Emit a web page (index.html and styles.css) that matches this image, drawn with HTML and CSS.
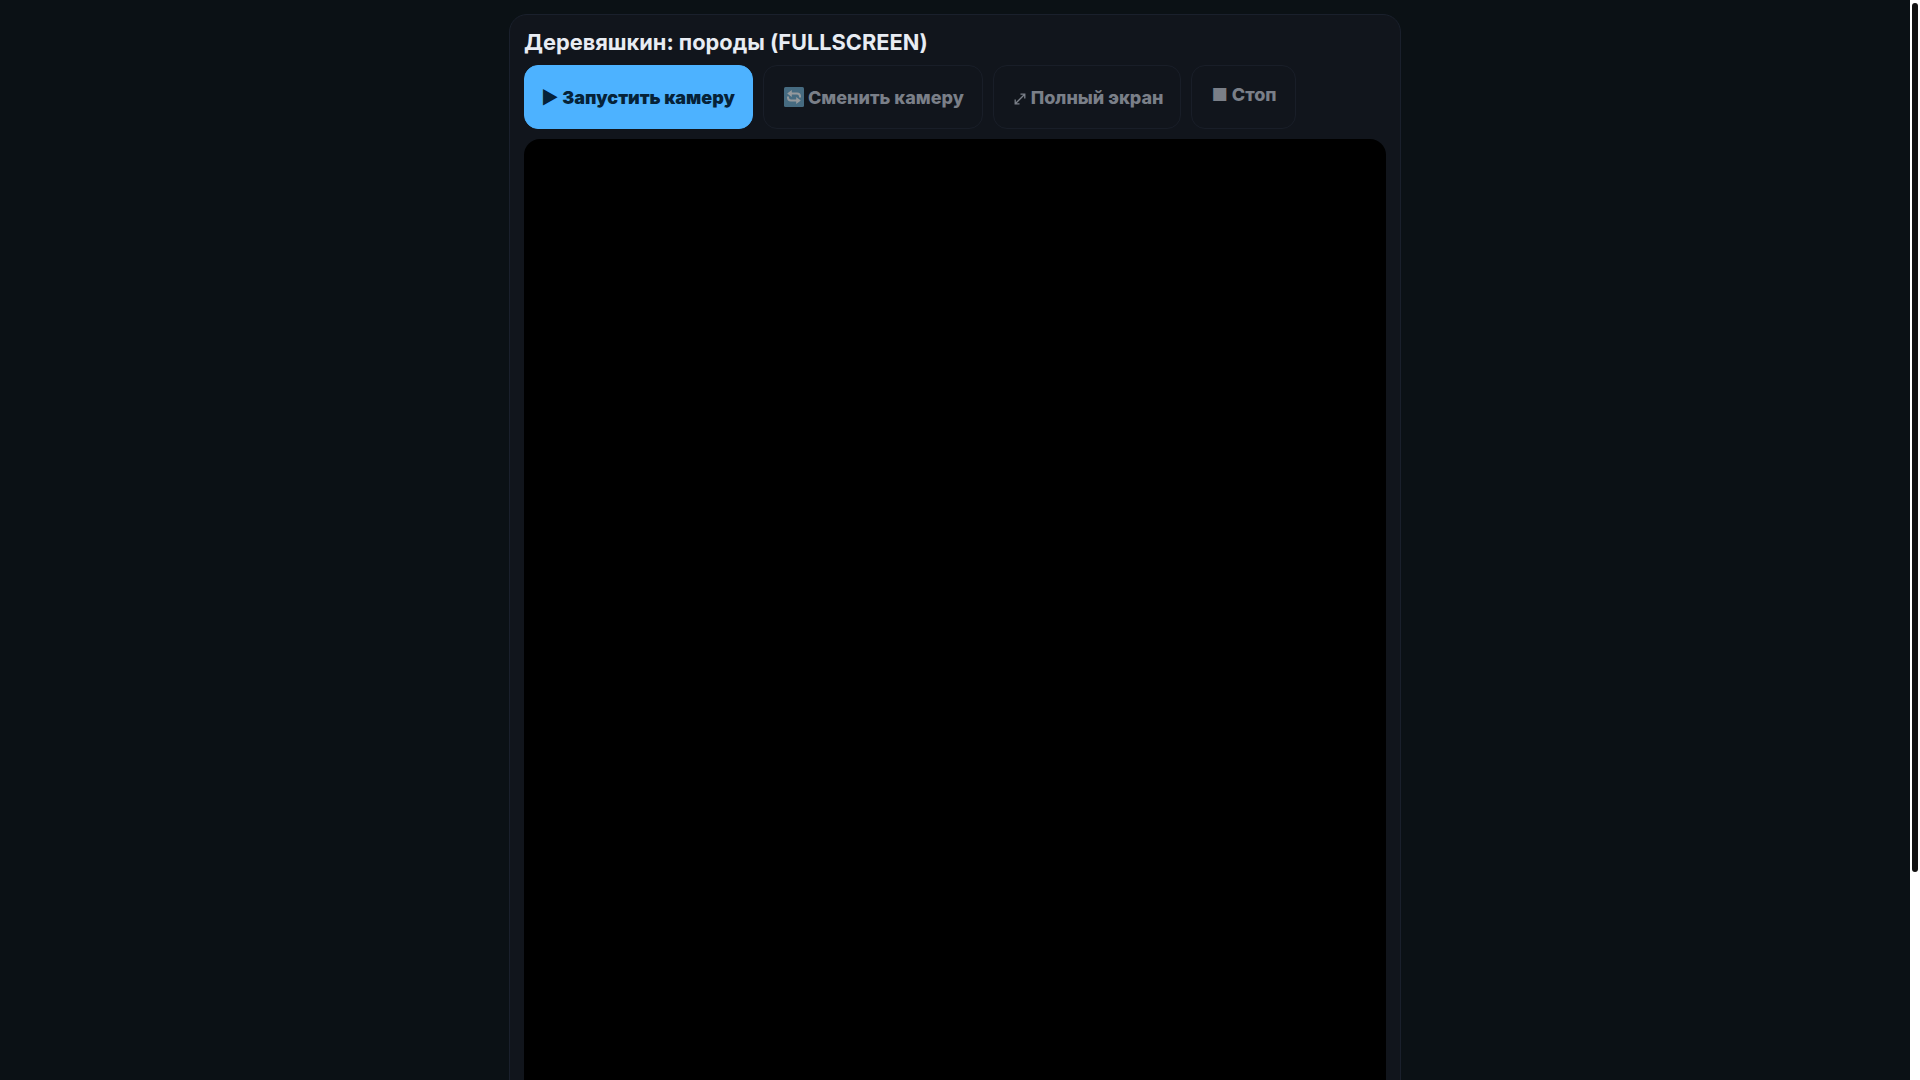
FILE: index.html
```html
<!DOCTYPE html>
<html lang="ru">
<head>
<meta charset="utf-8">
<title>Деревяшкин: породы</title>
<link rel="stylesheet" href="styles.css">
</head>
<body>
<main class="card">
  <h1 class="title">Деревяшкин: породы (FULLSCREEN)</h1>
  <div class="controls">
    <button class="btn btn-primary">▶ Запустить камеру</button>
    <button class="btn btn-muted"><svg class="emoji" viewBox="0 0 20 20" aria-hidden="true"><rect width="20" height="20" rx="1.5" fill="#6aa5c4"/><path d="M7 6.5h6a3 3 0 0 1 3 3v1M13 13.5H7a3 3 0 0 1-3-3v-1" fill="none" stroke="#eef2f4" stroke-width="2"/><path d="M3.2 6.5 7.8 3v7zM16.8 13.5 12.2 10v7z" fill="#eef2f4"/></svg> Сменить камеру</button>
    <button class="btn btn-muted btn-expand"><svg class="expand" viewBox="0 0 12 12" aria-hidden="true"><path d="M1.5 10.5 10.5 1.5M6.5 1.2h4.3v4.3M1.2 6.5v4.3h4.3" fill="none" stroke="currentColor" stroke-width="1.3"/></svg> Полный экран</button>
    <button class="btn btn-muted btn-stop">■ Стоп</button>
  </div>
  <div class="video"></div>
</main>
<div class="scrollbar"><div class="scrollbar-thumb"></div></div>
</body>
</html>
```
FILE: styles.css
```css
html { background: #0b1115; }
body {
  margin: 0 10px 0 0;
  padding: 14px 0;
  background: #0b1115;
  font-family: Inter, "Liberation Sans", sans-serif;
  color: #e8ecf3;
}
.card {
  box-sizing: border-box;
  width: 892px;
  margin: 0 auto;
  padding: 14px;
  background: #11151c;
  border: 1px solid #1a202c;
  border-radius: 18px;
}
.title {
  margin: 0 0 9px;
  font-size: 21.8px;
  line-height: 27px;
  font-weight: 700;
}
.controls { display: flex; gap: 10px; margin-bottom: 10px; }
.btn {
  height: 64px;
  padding: 0 18px;
  border: 1px solid #191e28;
  border-radius: 14px;
  background: transparent;
  font: 800 18px Inter, "Liberation Sans", sans-serif;
  white-space: nowrap;
}
.btn-primary {
  padding: 0 17px 0 16px;
  background: #4db2ff;
  border-color: #4db2ff;
  color: #062238;
  font-weight: 900;
}
.btn-muted { color: #7a7f88; }
.btn-expand { padding-right: 17px; }
.btn-stop { padding: 0 18px 5px 19px; }
.emoji { width: 20px; height: 20px; margin-left: 2px; vertical-align: -3px; opacity: .6; }
.expand { width: 12px; height: 12px; margin: 0 1px 0 2px; vertical-align: -1px; }
.video { height: 1180px; background: #000; border-radius: 16px; }
.scrollbar {
  position: fixed;
  top: 0;
  right: 0;
  bottom: 0;
  width: 10px;
  background: #fff;
}
.scrollbar-thumb {
  width: 6px;
  height: 869px;
  margin: 3px 2px 0;
  background: #111;
  border-radius: 3px;
}
```
